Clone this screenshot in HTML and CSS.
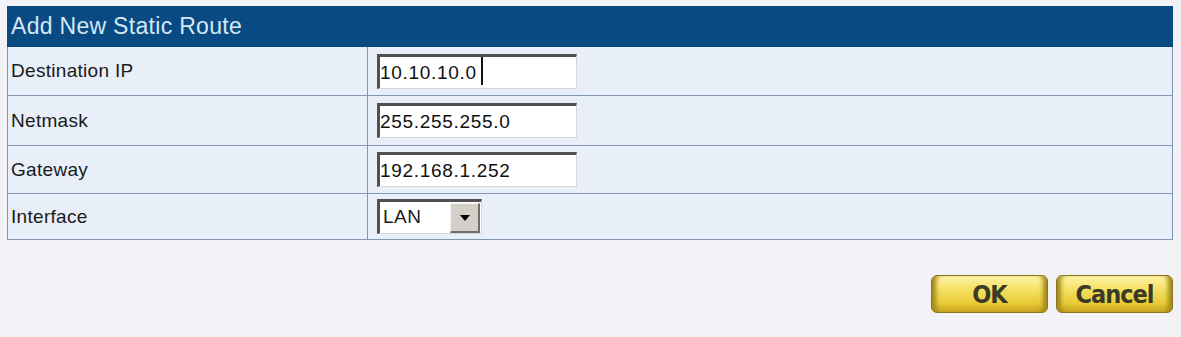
FILE: index.html
```html
<!DOCTYPE html>
<html lang="en">
<head>
    <meta charset="UTF-8">
    <title>Add New Static Route</title>
    <link rel="stylesheet" href="styles.css">
</head>
<body>

    <div class="panel">
        <table class="route-table">
            <tr>
                <th colspan="2">Add New Static Route</th>
            </tr>
            <tr class="row-dest">
                <td class="label">Destination IP</td>
                <td class="field">
                    <span class="input-wrap">
                        <input type="text" class="input-field" value="10.10.10.0">
                        <span class="caret"></span>
                    </span>
                </td>
            </tr>
            <tr class="row-mask">
                <td class="label">Netmask</td>
                <td class="field"><input type="text" class="input-field" value="255.255.255.0"></td>
            </tr>
            <tr class="row-gw">
                <td class="label">Gateway</td>
                <td class="field"><input type="text" class="input-field" value="192.168.1.252"></td>
            </tr>
            <tr class="row-if">
                <td class="label">Interface</td>
                <td class="field">
                    <div class="select-box">
                        <span class="select-value">LAN</span>
                        <span class="select-arrow">
                            <svg width="10" height="6" viewBox="0 0 10 6"><path d="M0 0 L10 0 L5 6 Z" fill="#000"/></svg>
                        </span>
                    </div>
                </td>
            </tr>
        </table>

        <div class="actions">
            <button class="gold-btn">OK</button>
            <button class="gold-btn">Cancel</button>
        </div>
    </div>

</body>
</html>
```

FILE: styles.css
```css
body {
    margin: 0;
    background: #f2f2f7;
    font-family: "Liberation Sans", Arial, sans-serif;
}
.panel {
    padding: 6px 8px 0 7px;
}
.route-table {
    width: 100%;
    border-collapse: collapse;
}
.route-table th {
    background: #0a4a82;
    color: #d3e8f6;
    font-weight: normal;
    font-size: 23px;
    letter-spacing: 0.3px;
    text-align: left;
    height: 39px;
    padding: 0 3px;
    border: 1px solid #0a4a82;
}
.route-table td {
    background: #e8eff9;
    border: 1px solid #8397b2;
    font-size: 19px;
    letter-spacing: 0.3px;
    color: #1a1a1a;
}
.row-dest td { height: 48px; }
.row-mask td { height: 49px; }
.row-gw td { height: 47px; }
.row-if td { height: 45px; }
.label {
    width: 356px;
    padding: 0 0 0 3px;
}
.field {
    padding: 0 0 0 9px;
}
.input-wrap {
    position: relative;
    display: inline-block;
    vertical-align: middle;
}
.input-field {
    display: block;
    width: 200px;
    height: 35px;
    box-sizing: border-box;
    border: 1px solid #d6d6d6;
    border-top: 3px solid #505050;
    border-left: 3px solid #505050;
    background: #fff;
    font-family: "Liberation Sans", Arial, sans-serif;
    font-size: 19px;
    letter-spacing: 0.7px;
    padding: 1px 0 0 0;
    color: #111;
}
.caret {
    position: absolute;
    left: 104px;
    top: 3px;
    width: 2px;
    height: 28px;
    background: #111;
}
.select-box {
    display: flex;
    width: 105px;
    height: 35px;
    box-sizing: border-box;
    border: 1px solid #d6d6d6;
    border-top: 3px solid #505050;
    border-left: 3px solid #505050;
    background: #fff;
}
.select-value {
    flex: 1;
    font-size: 19px;
    letter-spacing: 0.5px;
    padding: 4px 0 0 3px;
}
.select-arrow {
    width: 27px;
    margin: 1px 1px 0 0;
    background: #d4d0c8;
    border-top: 1px solid #f4f4f4;
    border-left: 1px solid #f4f4f4;
    border-right: 2px solid #6e6e6e;
    border-bottom: 2px solid #6e6e6e;
    display: flex;
    align-items: center;
    justify-content: center;
}
.actions {
    display: flex;
    justify-content: flex-end;
    gap: 8px;
    padding-top: 35px;
}
.gold-btn {
    width: 117px;
    height: 38px;
    padding: 0;
    border: 1px solid #8a7420;
    border-radius: 6px;
    background: linear-gradient(#fdf3a6, #f6e266 35%, #e8cb38 75%, #c8a420);
    box-shadow: inset 7px 0 4px -3px #a68a1c, inset -7px 0 4px -3px #a68a1c;
    color: #3a3a26;
    font-family: "Liberation Sans Narrow", "DejaVu Sans Condensed", sans-serif;
    font-stretch: condensed;
    font-weight: bold;
    font-size: 25px;
    letter-spacing: -1px;
    cursor: pointer;
}
```
